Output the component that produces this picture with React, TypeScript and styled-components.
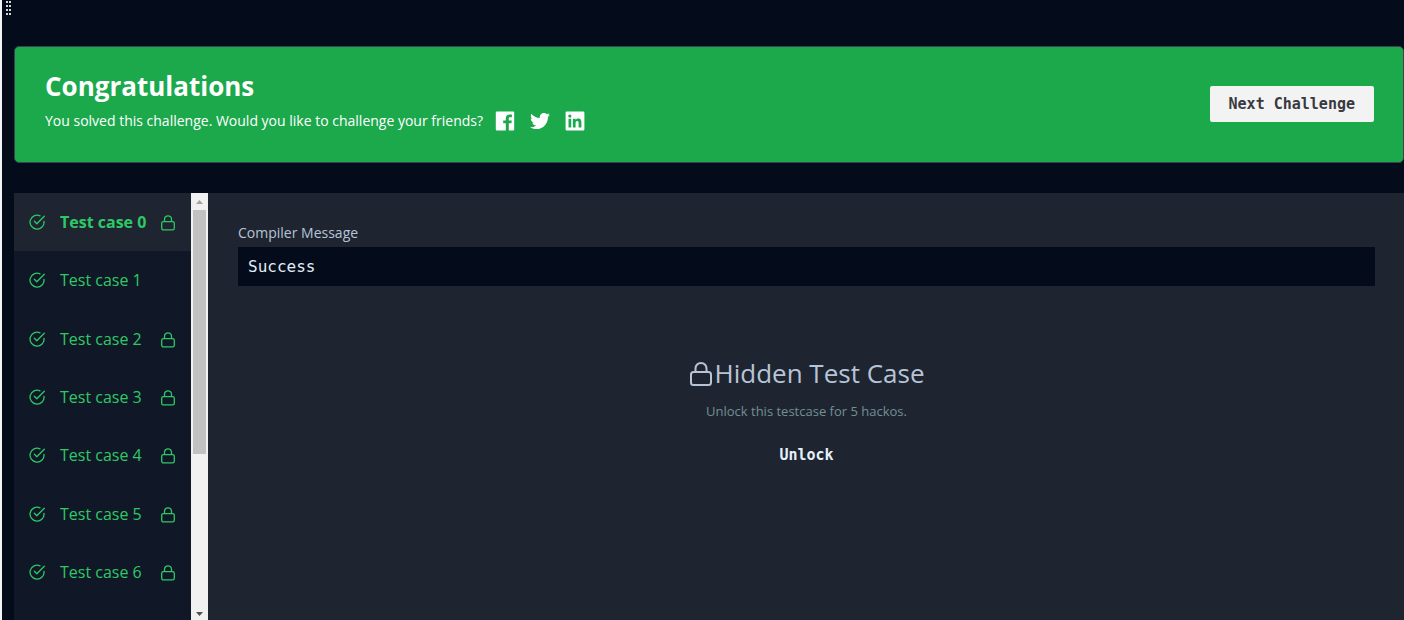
import React from "react";
import styled, { createGlobalStyle } from "styled-components";
import { FaTwitter } from "react-icons/fa";

const sans = `"Open Sans", "Noto Sans", sans-serif`;
const mono = `"DejaVu Sans Mono", "Liberation Mono", monospace`;

const GlobalStyle = createGlobalStyle`
  *, *::before, *::after { box-sizing: border-box; }
  body { margin: 0; background: #040b1a; font-family: ${sans}; }
  h1, h2, p, ul { margin: 0; padding: 0; }
  button { border: 0; cursor: pointer; }
`;

const Page = styled.div`
  position: relative;
  display: flex;
  flex-direction: column;
  gap: 30px;
  min-height: 100vh;
  padding: 46px 0 0 12px;
  border-left: 2px solid #f3f4f6;
  background: #040b1a;
`;

const DragHandle = styled.div`
  position: absolute;
  top: 1px;
  left: 4px;
  display: grid;
  grid-template-columns: 2px 2px;
  gap: 2px 1px;
`;

const Dot = styled.span`
  height: 2px;
  background: #d4d6da;
`;

const Banner = styled.header`
  display: flex;
  align-items: center;
  justify-content: space-between;
  height: 117px;
  padding: 0 29px 2px 30px;
  border: 1px solid #39424e;
  border-radius: 5px;
  background: #1ba94c;
  color: #fff;
`;

const Title = styled.h1`
  font-size: 26px;
  line-height: 34px;
  font-weight: 700;
`;

const Message = styled.div`
  display: flex;
  align-items: center;
  gap: 12px;
  height: 36px;
  font-size: 14px;
`;

const Shares = styled.div`
  display: flex;
  align-items: center;
  gap: 15px;
`;

const ShareLink = styled.a`
  display: flex;
  color: #fff;
`;

const NextButton = styled.button`
  height: 36px;
  padding: 0 19px;
  border-radius: 2px;
  background: #f3f3f3;
  color: #39393f;
  font: 700 15px ${mono};
`;

const Results = styled.main`
  display: flex;
  flex: 1;
`;

const Sidebar = styled.nav`
  width: 177px;
  background: #101827;
`;

const CaseList = styled.ul`
  display: grid;
  grid-auto-rows: 1fr;
  min-height: 408px;
  list-style: none;
`;

const CaseButton = styled.button<{ $active: boolean }>`
  display: grid;
  grid-template-columns: 16px 1fr 14px;
  align-items: center;
  column-gap: 15px;
  width: 100%;
  height: 100%;
  padding: 0 16px 0 15px;
  background: ${(p) => (p.$active ? "#1e2531" : "transparent")};
  color: #2ec866;
  font-family: ${sans};
  font-size: 16px;
  font-weight: ${(p) => (p.$active ? 700 : 400)};
  text-align: left;
  white-space: nowrap;
`;

const ScrollBar = styled.div`
  display: flex;
  flex-direction: column;
  align-items: center;
  width: 17px;
  background: #f1f1f1;
`;

const ScrollArrow = styled.svg`
  display: block;
  width: 17px;
  height: 17px;
`;

const ScrollTrack = styled.div`
  flex: 1;
  width: 13px;
`;

const ScrollThumb = styled.div`
  height: 62%;
  background: #c1c1c1;
`;

const Panel = styled.section`
  flex: 1;
  padding: 29px 29px 0 30px;
  background: #1e2531;
`;

const Label = styled.h2`
  color: #b7c4d6;
  font-size: 14px;
  line-height: 22px;
  font-weight: 400;
`;

const Output = styled.pre`
  margin: 3px 0 0;
  padding: 0 10px;
  background: #040b1a;
  color: #e0ecf8;
  font: 16px/39px ${mono};
`;

const Hidden = styled.div`
  display: flex;
  flex-direction: column;
  align-items: center;
  padding-top: 69px;
`;

const HiddenTitle = styled.h2`
  display: flex;
  align-items: center;
  gap: 2px;
  color: #b7c4d6;
  font-size: 26px;
  line-height: 36px;
  font-weight: 400;
`;

const Hint = styled.p`
  margin-top: 10px;
  color: #738f93;
  font-size: 13px;
  line-height: 20px;
`;

const UnlockButton = styled.button`
  margin-top: 24px;
  padding: 0;
  background: transparent;
  color: #e6f0fb;
  font: 700 15px/20px ${mono};
`;

const CheckIcon = () => (
  <svg width="16" height="16" viewBox="0 0 16 16" fill="none" stroke="currentColor" strokeWidth="1.3" strokeLinecap="round" strokeLinejoin="round" aria-hidden="true">
    <path d="M11 1.8A7 7 0 1 0 15 7.4" />
    <path d="M5.4 7.3 7.8 9.7 15.3 2.2" />
  </svg>
);

const LockIcon = ({ large = false }: { large?: boolean }) => (
  <svg
    width={large ? 24 : 14}
    height={large ? 26 : 18}
    viewBox={large ? "0 0 24 26" : "0 0 14 18"}
    fill="none"
    stroke="currentColor"
    strokeWidth={large ? 2 : 1.3}
    aria-hidden="true"
  >
    {large ? (
      <>
        <rect x="2" y="12" width="20" height="13" rx="2.5" />
        <path d="M6.5 12V8.400a5.500 5.500 0 0 1 11 0V12" />
      </>
    ) : (
      <>
        <rect x="0.7" y="8.7" width="12.6" height="8.2" rx="1.6" />
        <path d="M3.5 8.700V6.300a3.500 3.500 0 0 1 7 0V8.700" />
      </>
    )}
  </svg>
);

const FacebookIcon = () => (
  <svg width="20" height="20" viewBox="0 0 20 20" fill="currentColor" aria-hidden="true">
    <path d="M1.8.5h16.4a1 1 0 0 1 1 1v17a1 1 0 0 1-1 1h-4.4v-7.2h2.6l.4-2.900h-3V7.600c0-.9.3-1.400 1.500-1.400h1.600V3.600c-.3 0-1.200-.1-2.300-.1-2.300 0-3.800 1.400-3.800 3.900v2H8.200v2.900h2.600v7.200h-9a1 1 0 0 1-1-1v-17a1 1 0 0 1 1-1z" />
  </svg>
);

const LinkedinIcon = () => (
  <svg width="20" height="20" viewBox="0 0 20 20" fill="currentColor" fillRule="evenodd" aria-hidden="true">
    <path d="M1.8.5h16.4a1.200 1.200 0 0 1 1.200 1.200v16.600a1.200 1.200 0 0 1-1.200 1.200H1.800a1.200 1.200 0 0 1-1.200-1.200V1.700A1.200 1.200 0 0 1 1.800.5zM3.500 7.800v8.700h2.700V7.800zM4.850 3.500a1.600 1.600 0 1 0 0 3.200 1.600 1.600 0 0 0 0-3.200zM7.900 7.800v8.700h2.700v-4.300c0-1.200.3-2.200 1.600-2.200 1.400 0 1.400 1.200 1.400 2.300v4.200h2.800v-4.800c0-2.300-.5-4.100-3.200-4.100-1.300 0-2.200.7-2.600 1.400V7.800z" />
  </svg>
);

const cases = [
  { name: "Test case 0", locked: true },
  { name: "Test case 1", locked: false },
  { name: "Test case 2", locked: true },
  { name: "Test case 3", locked: true },
  { name: "Test case 4", locked: true },
  { name: "Test case 5", locked: true },
  { name: "Test case 6", locked: true },
];

export default function App() {
  const [selected, setSelected] = React.useState(0);

  return (
    <>
      <GlobalStyle />
      <Page>
        <DragHandle aria-hidden="true">
          {Array.from({ length: 8 }, (_, i) => (
            <Dot key={i} />
          ))}
        </DragHandle>
        <Banner>
          <div>
            <Title>Congratulations</Title>
            <Message>
              <p>You solved this challenge. Would you like to challenge your friends?</p>
              <Shares>
                <ShareLink href="#facebook" aria-label="Share on Facebook">
                  <FacebookIcon />
                </ShareLink>
                <ShareLink href="#twitter" aria-label="Share on Twitter">
                  <FaTwitter size={20} />
                </ShareLink>
                <ShareLink href="#linkedin" aria-label="Share on LinkedIn">
                  <LinkedinIcon />
                </ShareLink>
              </Shares>
            </Message>
          </div>
          <NextButton type="button">Next Challenge</NextButton>
        </Banner>
        <Results>
          <Sidebar aria-label="Test cases">
            <CaseList>
              {cases.map((item, i) => (
                <li key={item.name}>
                  <CaseButton type="button" $active={i === selected} onClick={() => setSelected(i)}>
                    <CheckIcon />
                    <span>{item.name}</span>
                    {item.locked && <LockIcon />}
                  </CaseButton>
                </li>
              ))}
            </CaseList>
          </Sidebar>
          <ScrollBar aria-hidden="true">
            <ScrollArrow viewBox="0 0 17 17">
              <path d="M5 11 8.5 7 12 11z" fill="#a3a3a3" />
            </ScrollArrow>
            <ScrollTrack>
              <ScrollThumb />
            </ScrollTrack>
            <ScrollArrow viewBox="0 0 17 17">
              <path d="M5 9 8.5 13 12 9z" fill="#505050" />
            </ScrollArrow>
          </ScrollBar>
          <Panel>
            <Label>Compiler Message</Label>
            <Output>Success</Output>
            <Hidden>
              <HiddenTitle>
                <LockIcon large />
                Hidden Test Case
              </HiddenTitle>
              <Hint>Unlock this testcase for 5 hackos.</Hint>
              <UnlockButton type="button">Unlock</UnlockButton>
            </Hidden>
          </Panel>
        </Results>
      </Page>
    </>
  );
}
